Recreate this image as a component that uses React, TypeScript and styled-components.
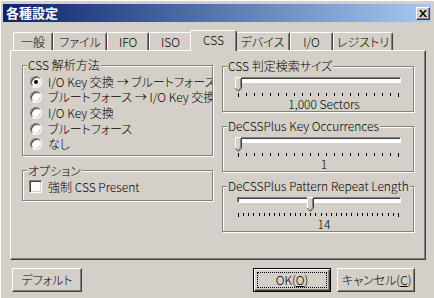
import styled, { createGlobalStyle } from "styled-components";

const GlobalStyle = createGlobalStyle`
  html, body { margin: 0; padding: 0; }
  body {
    background: #d4d0c8;
    font-family: "Noto Sans CJK JP", "Liberation Sans", sans-serif;
    font-size: 12px;
    font-weight: 300;
    color: #000;
    font-feature-settings: "palt";
  }
`;

const Window = styled.div`
  box-sizing: border-box;
  width: 434px;
  height: 298px;
  padding: 4px 3px 0;
  background: #d4d0c8;
  box-shadow: inset 1px 1px 0 #fff;
  display: flex;
  flex-direction: column;
`;

const TitleBar = styled.div`
  height: 18px;
  display: flex;
  align-items: center;
  justify-content: space-between;
  padding: 0 1px 0 3px;
  background: linear-gradient(to right, #0a246a, #a6caf0);
`;

const Title = styled.span`
  color: #fff;
  font-weight: bold;
  font-size: 13px;
  line-height: 18px;
`;

const CloseButton = styled.div`
  box-sizing: border-box;
  width: 14px;
  height: 13px;
  display: flex;
  align-items: center;
  justify-content: center;
  background: #d4d0c8;
  border: 1px solid;
  border-color: #fff #404040 #404040 #fff;
  box-shadow: inset -1px -1px 0 #808080;
`;

const Content = styled.div`
  padding: 8px 0 0 7px;
`;

const TabRow = styled.div`
  display: flex;
  align-items: flex-end;
  height: 20px;
  padding-left: 3px;
`;

const Tab = styled.div<{ $w: number; $active?: boolean }>`
  box-sizing: border-box;
  position: relative;
  z-index: ${(p) => (p.$active ? 2 : 1)};
  width: ${(p) => (p.$active ? p.$w + 4 : p.$w)}px;
  height: ${(p) => (p.$active ? 21 : 18)}px;
  margin: ${(p) => (p.$active ? "0 -2px -1px" : "0")};
  padding-bottom: ${(p) => (p.$active ? 3 : 0)}px;
  display: flex;
  align-items: center;
  justify-content: center;
  background: #d4d0c8;
  border-top: 1px solid #fff;
  border-left: 1px solid #fff;
  border-right: 1px solid #404040;
  border-radius: 2px 2px 0 0;
  box-shadow: inset -1px 0 0 #808080;
  white-space: nowrap;
  line-height: 14px;
`;

const Panel = styled.div`
  box-sizing: border-box;
  width: 416px;
  height: 210px;
  padding: 7px 0 0 11px;
  border: 1px solid;
  border-color: #fff #404040 #404040 #fff;
  box-shadow: inset -1px -1px 0 #808080;
  display: grid;
  grid-template-columns: 191px 192px;
  column-gap: 9px;
  align-items: start;
`;

const Column = styled.div<{ $top?: number }>`
  display: flex;
  flex-direction: column;
  padding-top: ${(p) => p.$top ?? 0}px;
`;

const GroupBox = styled.fieldset<{ $gap?: number }>`
  margin: ${(p) => p.$gap ?? 0}px 0 0;
  padding: 0;
  min-width: 0;
  border: 1px solid #808080;
  box-shadow: inset 1px 1px 0 #fff, 1px 1px 0 #fff;
`;

const Legend = styled.legend`
  margin-left: 4px;
  padding: 0 1px;
  background: #d4d0c8;
  line-height: 14px;
  white-space: nowrap;
`;

const OptionList = styled.div<{ $pt: number; $pb: number; $pl: number }>`
  padding: ${(p) => p.$pt}px 0 ${(p) => p.$pb}px ${(p) => p.$pl}px;
  overflow: hidden;
`;

const OptionRow = styled.div<{ $h: number }>`
  height: ${(p) => p.$h}px;
  display: flex;
  align-items: center;
  gap: 6px;
  white-space: nowrap;
  line-height: 14px;
`;

const RadioDot = styled.span<{ $on?: boolean }>`
  box-sizing: border-box;
  flex: none;
  width: 12px;
  height: 12px;
  border-radius: 50%;
  background: #fff;
  border: 1px solid;
  border-color: #808080 #fff #fff #808080;
  box-shadow: inset 1px 1px 0 #404040, inset -1px -1px 0 #d4d0c8;
  display: flex;
  align-items: center;
  justify-content: center;

  &::after {
    content: "";
    width: 4px;
    height: 4px;
    border-radius: 50%;
    background: ${(p) => (p.$on ? "#000" : "transparent")};
  }
`;

const CheckBox = styled.span`
  box-sizing: border-box;
  flex: none;
  width: 13px;
  height: 13px;
  background: #fff;
  border: 1px solid;
  border-color: #808080 #fff #fff #808080;
  box-shadow: inset 1px 1px 0 #404040, inset -1px -1px 0 #d4d0c8;
`;

const SliderWrap = styled.div`
  width: 164px;
  margin: 4px 0 1px 14px;
`;

const TrackArea = styled.div`
  position: relative;
  height: 16px;
`;

const Track = styled.div`
  box-sizing: border-box;
  margin-top: 2px;
  height: 6px;
  background: #fff;
  border: 1px solid;
  border-color: #808080 #fff #fff #808080;
  box-shadow: inset 1px 1px 0 #404040;
`;

const Thumb = styled.svg`
  position: absolute;
  top: 0;
  display: block;
`;

const TickRow = styled.div`
  height: 4px;
  display: flex;
  justify-content: space-between;
  align-items: flex-start;
  padding: 0 2px 0 1px;
`;

const Tick = styled.span<{ $end?: boolean }>`
  width: 1px;
  height: ${(p) => (p.$end ? 4 : 3)}px;
  background: #000;
`;

const SliderValue = styled.div`
  text-align: center;
  padding-left: 10px;
  line-height: 13px;
  white-space: nowrap;
`;

const ButtonRow = styled.div`
  display: flex;
  align-items: center;
  margin-top: 8px;
  padding: 0 16px 0 9px;
  gap: 6px;
`;

const Spacer = styled.div`
  flex: 1;
`;

const Button = styled.div<{ $w: number; $default?: boolean }>`
  box-sizing: border-box;
  width: ${(p) => p.$w}px;
  height: 24px;
  padding: 3px;
  display: flex;
  background: #d4d0c8;
  border: 1px solid;
  border-color: ${(p) => (p.$default ? "#000" : "#fff #404040 #404040 #fff")};
  box-shadow: ${(p) =>
    p.$default
      ? "inset 1px 1px 0 #fff, inset -1px -1px 0 #404040, inset -2px -2px 0 #808080"
      : "inset -1px -1px 0 #808080"};
`;

const ButtonLabel = styled.span<{ $focus?: boolean }>`
  flex: 1;
  display: flex;
  align-items: center;
  justify-content: center;
  border: 1px dotted ${(p) => (p.$focus ? "#000" : "transparent")};
  white-space: nowrap;
  line-height: 14px;
`;

const tabs = [
  { label: "一般", w: 40 },
  { label: "ファイル", w: 54 },
  { label: "IFO", w: 42 },
  { label: "ISO", w: 43 },
  { label: "CSS", w: 43, active: true },
  { label: "デバイス", w: 55 },
  { label: "I/O", w: 43 },
  { label: "レジストリ", w: 60 },
];

const methods = [
  "I/O Key 交換 → ブルートフォース",
  "ブルートフォース → I/O Key 交換",
  "I/O Key 交換",
  "ブルートフォース",
  "なし",
];

type SliderProps = { ticks: number; value: number; label: string };

const Slider = ({ ticks, value, label }: SliderProps) => (
  <SliderWrap>
    <TrackArea>
      <Track />
      <Thumb width="7" height="15" viewBox="0 0 7 15" style={{ left: value * 160 - 2.5 }}>
        <polygon points="0,0 7,0 7,11 3.5,14.5 0,11" fill="#d4d0c8" />
        <polyline points="0.5,11 0.5,0.5 6,0.5" fill="none" stroke="#fff" />
        <polyline points="6.5,0.5 6.5,11 3.5,14.3 0.5,11.3" fill="none" stroke="#404040" />
        <polyline points="5.5,1.5 5.5,10.6 3.5,12.8" fill="none" stroke="#808080" />
      </Thumb>
    </TrackArea>
    <TickRow>
      {Array.from({ length: ticks }, (_, i) => (
        <Tick key={i} $end={i === 0 || i === ticks - 1} />
      ))}
    </TickRow>
    <SliderValue>{label}</SliderValue>
  </SliderWrap>
);

export default function App() {
  return (
    <>
      <GlobalStyle />
      <Window>
        <TitleBar>
          <Title>各種設定</Title>
          <CloseButton>
            <svg width="8" height="7" viewBox="0 0 8 7">
              <path d="M0 0h2l2 2.5L6 0h2L5 3.5 8 7H6L4 4.5 2 7H0l3-3.5z" fill="#000" />
            </svg>
          </CloseButton>
        </TitleBar>

        <Content>
          <TabRow>
            {tabs.map((t) => (
              <Tab key={t.label} $w={t.w} $active={t.active}>
                {t.label}
              </Tab>
            ))}
          </TabRow>

          <Panel>
            <Column>
              <GroupBox>
                <Legend>CSS 解析方法</Legend>
                <OptionList $pt={2} $pb={3} $pl={7}>
                  {methods.map((m, i) => (
                    <OptionRow key={m} $h={15.6}>
                      <RadioDot $on={i === 0} />
                      {m}
                    </OptionRow>
                  ))}
                </OptionList>
              </GroupBox>

              <GroupBox $gap={8}>
                <Legend>オプション</Legend>
                <OptionList $pt={1} $pb={5} $pl={6}>
                  <OptionRow $h={16}>
                    <CheckBox />
                    強制 CSS Present
                  </OptionRow>
                </OptionList>
              </GroupBox>
            </Column>

            <Column $top={1}>
              <GroupBox>
                <Legend>CSS 判定検索サイズ</Legend>
                <Slider ticks={21} value={0} label="1,000 Sectors" />
              </GroupBox>
              <GroupBox $gap={7}>
                <Legend>DeCSSPlus Key Occurrences</Legend>
                <Slider ticks={21} value={0} label="1" />
              </GroupBox>
              <GroupBox $gap={7}>
                <Legend>DeCSSPlus Pattern Repeat Length</Legend>
                <Slider ticks={32} value={0.45} label="14" />
              </GroupBox>
            </Column>
          </Panel>
        </Content>

        <ButtonRow>
          <Button $w={70}>
            <ButtonLabel>デフォルト</ButtonLabel>
          </Button>
          <Spacer />
          <Button $w={78} $default>
            <ButtonLabel $focus>
              OK(<u>O</u>)
            </ButtonLabel>
          </Button>
          <Button $w={78}>
            <ButtonLabel>
              キャンセル(<u>C</u>)
            </ButtonLabel>
          </Button>
        </ButtonRow>
      </Window>
    </>
  );
}
